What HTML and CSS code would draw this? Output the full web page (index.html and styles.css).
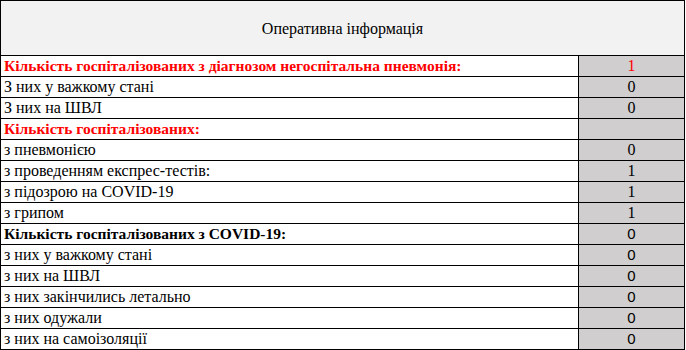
FILE: index.html
```html
<!DOCTYPE html>
<html lang="uk">
<head>
<meta charset="utf-8">
<title>Оперативна інформація</title>
<link rel="stylesheet" href="styles.css">
</head>
<body>
<div class="sheet">
  <div class="cell head">Оперативна інформація</div>

  <div class="cell label bold red">Кількість госпіталізованих з діагнозом негоспітальна пневмонія:</div>
  <div class="cell value red">1</div>
  <div class="cell label">З них у важкому стані</div>
  <div class="cell value">0</div>
  <div class="cell label">З них на ШВЛ</div>
  <div class="cell value">0</div>

  <div class="cell label bold red">Кількість госпіталізованих:</div>
  <div class="cell value"></div>
  <div class="cell label">з пневмонією</div>
  <div class="cell value">0</div>
  <div class="cell label">з проведенням експрес-тестів:</div>
  <div class="cell value">1</div>
  <div class="cell label">з підозрою на COVID-19</div>
  <div class="cell value">1</div>
  <div class="cell label">з грипом</div>
  <div class="cell value">1</div>

  <div class="cell label bold">Кількість госпіталізованих з COVID-19:</div>
  <div class="cell value sans">0</div>
  <div class="cell label">з них у важкому стані</div>
  <div class="cell value sans">0</div>
  <div class="cell label">з них на ШВЛ</div>
  <div class="cell value sans">0</div>
  <div class="cell label">з них закінчились летально</div>
  <div class="cell value sans">0</div>
  <div class="cell label">з них одужали</div>
  <div class="cell value sans">0</div>
  <div class="cell label">з них на самоізоляції</div>
  <div class="cell value sans">0</div>
</div>
</body>
</html>
```

FILE: styles.css
```css
html, body {
  margin: 0;
  padding: 0;
  background: #ffffff;
}

.sheet {
  display: grid;
  grid-template-columns: 578px 106px;
  grid-template-rows: 55px;
  grid-auto-rows: 21px;
  width: 685px;
  box-sizing: border-box;
  border-top: 1px solid #000;
  border-left: 1px solid #000;
  font-family: "Liberation Serif", "Times New Roman", serif;
  font-size: 16px;
  color: #000;
}

.cell {
  box-sizing: border-box;
  border-right: 1px solid #000;
  border-bottom: 1px solid #000;
  display: flex;
  align-items: flex-end;
  line-height: 18px;
  padding-bottom: 1px;
  white-space: nowrap;
  overflow: hidden;
}

.head {
  grid-column: 1 / span 2;
  background: #f2f2f2;
  justify-content: center;
  align-items: center;
  padding-bottom: 0;
  padding-top: 1px;
}

.label {
  padding-left: 3px;
}

.value {
  background: #d0cece;
  justify-content: center;
}

.bold {
  font-weight: bold;
  font-size: 15.5px;
}

.red {
  color: #ff0000;
}

.sans {
  font-family: "Liberation Sans", Arial, sans-serif;
  font-size: 15px;
}
```
